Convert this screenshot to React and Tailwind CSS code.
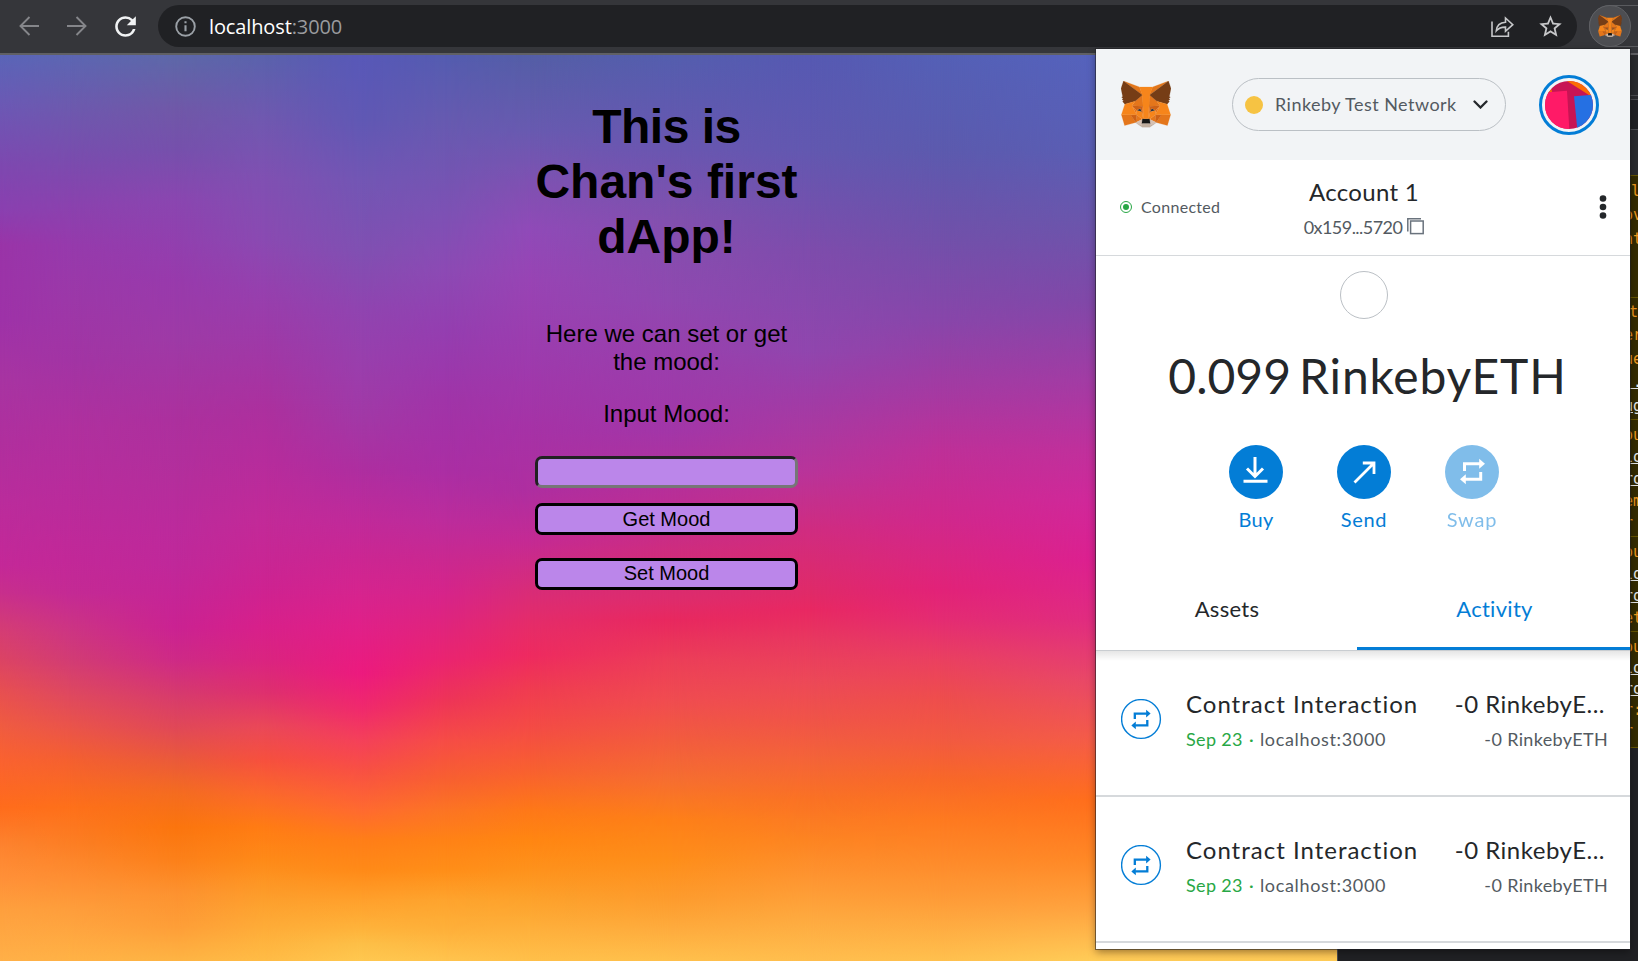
import { MdRefresh, MdStarBorder } from 'react-icons/md';

const MESH = [
  { x: 0, s: [[55, '#5a65b8'], [100, '#6a5ab5'], [165, '#7e48b0'], [210, '#8a40b0'], [245, '#9a34a8'], [320, '#9e32a8'], [380, '#a834a2'], [440, '#b02f9e'], [500, '#ba2c9c'], [565, '#c42898'], [593, '#c82f8c'], [627, '#d43c76'], [660, '#dc4464'], [693, '#e85050'], [727, '#f05c40'], [760, '#fa6230'], [807, '#ff6c1c'], [843, '#fd822e'], [877, '#ff9038'], [910, '#fea03e'], [961, '#ffb048']] },
  { x: 70, s: [[55, '#5c66b2'], [105, '#6c5aae'], [160, '#7a4cae'], [205, '#8a42ae'], [245, '#963aac'], [300, '#9c38a8'], [360, '#a234a4'], [430, '#b0309e'], [490, '#b82c9c'], [560, '#c22898'], [593, '#c42a94'], [627, '#cc3484'], [660, '#d23c74'], [693, '#de4860'], [727, '#ea544a'], [760, '#f46030'], [807, '#fe701a'], [843, '#fc7e24'], [877, '#fe8e32'], [910, '#fe9e3c'], [961, '#ffb246']] },
  { x: 175, s: [[55, '#5d68a8'], [110, '#7058a8'], [150, '#7650ac'], [200, '#8a46b0'], [245, '#923fae'], [280, '#983aac'], [340, '#9e3aa6'], [420, '#ac309e'], [480, '#b42e9c'], [530, '#bc2a9c'], [565, '#c0289a'], [627, '#ca2292'], [660, '#ce2a86'], [693, '#d63a6e'], [727, '#e04858'], [760, '#ea5a3a'], [793, '#f46c20'], [827, '#fb750e'], [860, '#fc801a'], [893, '#fd9230'], [927, '#fe9e38'], [961, '#feb444']] },
  { x: 265, s: [[55, '#5a62ac'], [120, '#7058b0'], [180, '#8050b2'], [240, '#8a4ab2'], [290, '#9640ae'], [350, '#a038a6'], [410, '#ac309e'], [460, '#b62c9c'], [520, '#c22a98'], [560, '#c82694'], [593, '#cf2290'], [627, '#d8208a'], [660, '#da2480'], [693, '#de306e'], [727, '#ea4858'], [760, '#f6503e'], [793, '#fb682c'], [827, '#ff7c14'], [860, '#fe8a18'], [893, '#fd9c2a'], [927, '#feac38'], [961, '#ffbc46']] },
  { x: 362, s: [[55, '#5858b8'], [120, '#6058b4'], [180, '#7256b4'], [250, '#8050b2'], [310, '#9044b0'], [370, '#9a3eac'], [420, '#a238a6'], [470, '#ae2ea0'], [520, '#c02a9a'], [560, '#cc2692'], [593, '#d6248e'], [627, '#e02088'], [673, '#ec1a7e'], [710, '#f02a6c'], [740, '#f4405a'], [770, '#f85044'], [810, '#ff6a30'], [840, '#ff7e18'], [870, '#ff8a18'], [900, '#ffa02c'], [930, '#feb43c'], [945, '#fdc048'], [961, '#ffc850']] },
  { x: 445, s: [[55, '#545cb0'], [120, '#665ab0'], [210, '#7c52b4'], [270, '#8c4ab4'], [330, '#943eb0'], [400, '#a034a8'], [470, '#aa2ea4'], [520, '#bc2c9c'], [560, '#ca2890'], [593, '#d6248a'], [627, '#e0247c'], [660, '#ea2470'], [700, '#ee3458'], [740, '#f64c46'], [780, '#f86030'], [810, '#fc7424'], [840, '#ff8216'], [870, '#ff8e18'], [900, '#fea42e'], [930, '#feb03a'], [961, '#ffc44e']] },
  { x: 530, s: [[55, '#545ea6'], [130, '#685ab0'], [190, '#8250b2'], [230, '#904ab8'], [280, '#9844b4'], [350, '#9c3cae'], [430, '#a632a6'], [490, '#ae2ea0'], [540, '#c42a94'], [590, '#d82c78'], [627, '#e62c68'], [655, '#ee2a60'], [690, '#f03c50'], [730, '#f44c44'], [770, '#f86030'], [810, '#fe7818'], [840, '#ff8612'], [870, '#fe921c'], [900, '#fda22c'], [930, '#feb03c'], [961, '#ffc04a']] },
  { x: 670, s: [[55, '#545eae'], [150, '#6a56b0'], [220, '#8250ae'], [300, '#9048b0'], [360, '#9a3eac'], [430, '#a236a8'], [500, '#ba2e96'], [560, '#d22c7a'], [600, '#de2c6c'], [620, '#e8285f'], [660, '#ec3e58'], [700, '#f04c50'], [740, '#f25c3e'], [780, '#f66e30'], [820, '#fe8018'], [860, '#fe8e1a'], [900, '#fd9c2e'], [930, '#feac3e'], [961, '#ffc04c']] },
  { x: 810, s: [[55, '#5659b2'], [150, '#6258b0'], [250, '#7e4cac'], [350, '#9046ae'], [400, '#a03ca6'], [470, '#b8349a'], [530, '#d02c80'], [593, '#e02a68'], [610, '#e82862'], [640, '#e83860'], [680, '#ec4858'], [720, '#f05448'], [760, '#f46438'], [800, '#fa7224'], [840, '#fd8422'], [880, '#fe9632'], [920, '#feaa40'], [961, '#ffbe4e']] },
  { x: 940, s: [[55, '#5460b6'], [150, '#5c5aae'], [240, '#7250aa'], [320, '#8846aa'], [390, '#a43aa2'], [450, '#be3098'], [520, '#d0288c'], [560, '#da2680'], [590, '#e22278'], [620, '#e42c72'], [660, '#ea4060'], [700, '#ee4e4c'], [740, '#f25a40'], [780, '#f86828'], [820, '#fe7a20'], [860, '#fe8a2a'], [900, '#fe9c38'], [961, '#ffc04e']] },
  { x: 1095, s: [[55, '#5562bc'], [150, '#5a5eb4'], [220, '#6a56ac'], [300, '#8048a8'], [380, '#a23ca4'], [450, '#c0309c'], [500, '#d0289a'], [560, '#dc2090'], [620, '#e02c80'], [680, '#e84868'], [740, '#f45c48'], [800, '#ff6e1c'], [860, '#ff8826'], [910, '#ffa440'], [961, '#ffcc58']] },
];

function Wallpaper() {
  return (
    <svg className="absolute inset-0" width="1337" height="906" viewBox="0 55 1337 906" preserveAspectRatio="none" aria-hidden="true">
      <defs>
        {MESH.map((c, i) => (
          <linearGradient key={i} id={'c' + i} gradientUnits="userSpaceOnUse" x1="0" y1="55" x2="0" y2="961">
            {c.s.map(([y, col]) => <stop key={y} offset={(y - 55) / 906} stopColor={col} />)}
          </linearGradient>
        ))}
        {MESH.slice(1).map((c, i) => (
          <linearGradient key={i} id={'f' + (i + 1)} gradientUnits="userSpaceOnUse" x1={MESH[i].x} y1="0" x2={c.x} y2="0">
            <stop offset="0" stopColor="#fff" stopOpacity="0" />
            <stop offset="1" stopColor="#fff" stopOpacity="1" />
          </linearGradient>
        ))}
        {MESH.slice(1).map((c, i) => (
          <mask key={i} id={'m' + (i + 1)} maskUnits="userSpaceOnUse" x="0" y="55" width="1337" height="906">
            <rect x={MESH[i].x} y="55" width={1337 - MESH[i].x} height="906" fill={`url(#f${i + 1})`} />
          </mask>
        ))}
      </defs>
      {MESH.map((c, i) => (
        <rect key={i} x="0" y="55" width="1337" height="906" fill={`url(#c${i})`} mask={i ? `url(#m${i})` : undefined} />
      ))}
    </svg>
  );
}

const FOX = [
  ['#E2761B', '274.1,35.5 174.6,109.4 193,65.8'],
  ['#E2761B', '44.4,35.5 143.1,110.1 125.6,65.8'],
  ['#E4761B', '238.3,206.8 211.8,247.4 268.5,263 284.8,207.7'],
  ['#E4761B', '33.9,207.7 50.1,263 106.8,247.4 80.3,206.8'],
  ['#E4761B', '103.6,138.2 87.8,162.1 144.1,164.6 142.1,104.1'],
  ['#E4761B', '214.9,138.2 175.9,103.4 174.6,164.6 230.8,162.1'],
  ['#E4761B', '106.8,247.4 140.6,230.9 111.4,208.1'],
  ['#E4761B', '177.9,230.9 211.8,247.4 207.1,208.1'],
  ['#D7C1B3', '211.8,247.4 177.9,230.9 180.6,253 180.3,262.3'],
  ['#D7C1B3', '106.8,247.4 138.3,262.3 138.1,253 140.6,230.9'],
  ['#233447', '138.8,193.5 110.6,185.2 130.5,176.1'],
  ['#233447', '179.7,193.5 188,176.1 208,185.2'],
  ['#CD6116', '106.8,247.4 111.6,206.8 80.3,207.7'],
  ['#CD6116', '207,206.8 211.8,247.4 238.3,207.7'],
  ['#CD6116', '230.8,162.1 174.6,164.6 179.8,193.5 188.1,176.1 208.1,185.2'],
  ['#CD6116', '110.6,185.2 130.6,176.1 138.8,193.5 144.1,164.6 87.8,162.1'],
  ['#E4751F', '87.8,162.1 111.4,208.1 110.6,185.2'],
  ['#E4751F', '208.1,185.2 207.1,208.1 230.8,162.1'],
  ['#E4751F', '144.1,164.6 138.8,193.5 145.4,227.6 146.9,182.7'],
  ['#E4751F', '174.6,164.6 171.9,182.6 173.1,227.6 179.8,193.5'],
  ['#F6851B', '179.8,193.5 173.1,227.6 177.9,230.9 207.1,208.1 208.1,185.2'],
  ['#F6851B', '110.6,185.2 111.4,208.1 140.6,230.9 145.4,227.6 138.8,193.5'],
  ['#C0AD9E', '180.3,262.3 180.6,253 178.1,250.8 140.4,250.8 138.1,253 138.3,262.3 106.8,247.4 117.8,256.4 140.1,271.9 178.4,271.9 200.8,256.4 211.8,247.4'],
  ['#161616', '177.9,230.9 173.1,227.6 145.4,227.6 140.6,230.9 138.1,253 140.4,250.8 178.1,250.8 180.6,253'],
  ['#763D16', '278.3,114.2 286.8,73.4 274.1,35.5 177.9,106.9 214.9,138.2 267.2,153.5 278.8,140 273.8,136.4 281.8,129.1 275.6,124.3 283.6,118.2'],
  ['#763D16', '31.8,73.4 40.3,114.2 34.9,118.2 42.9,124.3 36.8,129.1 44.8,136.4 39.8,140 51.3,153.5 103.6,138.2 140.6,106.9 44.4,35.5'],
  ['#F6851B', '267.2,153.5 214.9,138.2 230.8,162.1 207.1,208.1 238.3,207.7 284.8,207.7'],
  ['#F6851B', '103.6,138.2 51.3,153.5 33.9,207.7 80.3,207.7 111.4,208.1 87.8,162.1'],
  ['#F6851B', '174.6,164.6 177.9,106.9 193.1,65.8 125.6,65.8 140.6,106.9 144.1,164.6 145.3,182.8 145.4,227.6 173.1,227.6 173.3,182.8'],
];

function Fox({ className }) {
  return (
    <svg className={className} viewBox="31.8 35.5 255 236.4" aria-hidden="true">
      {FOX.map(([c, p], i) => <polygon key={i} points={p} fill={c} stroke={c} strokeWidth="1" />)}
    </svg>
  );
}

function SwapArrows() {
  return (
    <g>
      <path d="M19.5 26V18.8H35" fill="none" stroke="currentColor" strokeWidth="3" />
      <path d="M34.2 13.8L40 18.8L34.2 23.8Z" fill="currentColor" />
      <path d="M35.7 27V34.2H20" fill="none" stroke="currentColor" strokeWidth="3" />
      <path d="M20.8 29.2L15 34.2L20.8 39.2Z" fill="currentColor" />
    </g>
  );
}

function Toolbar() {
  return (
    <div className="flex h-[55px] shrink-0 items-center border-b-2 border-[#606064] bg-[#35363a]">
      <div className="flex h-[53px] w-full items-center pb-px">
        <svg className="ml-[19px] size-5 shrink-0 text-[#85868a]" viewBox="0 0 20 20" fill="none" stroke="currentColor" strokeWidth="1.9">
          <path d="M20 10H2M10.5 1L1.5 10l9 9" />
        </svg>
        <svg className="ml-7 size-5 shrink-0 text-[#85868a]" viewBox="0 0 20 20" fill="none" stroke="currentColor" strokeWidth="1.9">
          <path d="M0 10h18M9.5 1l9 9-9 9" />
        </svg>
        <MdRefresh className="ml-[23px] shrink-0 text-[#f1f3f4]" size={31} />
        <div className="ml-[17px] flex h-[42px] w-[1419px] shrink-0 items-center rounded-full bg-[#202124] pl-[17px]">
          <svg className="size-[21px] shrink-0 text-[#9aa0a6]" viewBox="0 0 21 21" fill="none" stroke="currentColor">
            <circle cx="10.5" cy="10.5" r="9.3" strokeWidth="1.9" />
            <path d="M10.5 9.3v6M10.5 5.2v2.1" strokeWidth="2.1" />
          </svg>
          <div className="ml-[13px] pt-px font-['Open_Sans',sans-serif] text-[20px] leading-6 tracking-[-0.12px] text-white">
            localhost<span className="text-[#9a9b9e]">:3000</span>
          </div>
          <svg className="ml-auto size-6 shrink-0 text-[#c7c8ca]" viewBox="0 0 24 24" fill="none" stroke="currentColor" strokeWidth="1.6">
            <path d="M2 7.500v14.700h16.400v-4.500" />
            <path d="M6.300 16.800c.4-5.400 3.600-8.300 9.200-8.600V4l7.300 6.700-7.300 6.600v-4.200c-4-.1-6.800.9-9.200 3.700z" strokeLinejoin="miter" />
          </svg>
          <MdStarBorder className="ml-[23px] mr-[13px] shrink-0 text-[#c7c8ca]" size={27} />
        </div>
        <div className="ml-3 flex h-[42px] flex-1 items-center rounded-l-full border-y border-l border-[#5a5b5f]">
          <div className="-ml-px flex size-[42px] shrink-0 items-center justify-center rounded-full border border-[#606165] bg-[#4d4e52]">
            <Fox className="w-6" />
          </div>
        </div>
      </div>
    </div>
  );
}

function Dapp() {
  return (
    <div className="relative w-[1337px] shrink-0 overflow-hidden">
      <Wallpaper />
      <div className="relative ml-[535px] flex w-[263px] flex-col pt-[44px] text-center font-['Liberation_Sans',Arial,sans-serif] text-black">
        <h1 className="whitespace-nowrap text-[48px] font-bold leading-[55px]">
          <span className="tracking-[-0.5px]">This is</span><br />Chan's first<br />dApp!
        </h1>
        <p className="mt-[56px] text-[24px] leading-[28px]">Here we can set or get<br />the mood:</p>
        <p className="mt-6 text-[24px] leading-[28px]">Input Mood:</p>
        <input className="mt-7 h-8 w-full rounded-[7px] border-[3px] border-b-[#767676] border-l-[#212121] border-r-[#767676] border-t-[#212121] bg-[#bb86ea] px-2" />
        <button className="mt-[15px] h-8 rounded-[7px] border-[3px] border-black bg-[#bb86ea] text-[20px] leading-[26px]">Get Mood</button>
        <button className="mt-[23px] flex h-8 justify-center rounded-[7px] border-[3px] border-black bg-[#bb86ea] text-[20px] leading-[24px]">Set Mood</button>
      </div>
    </div>
  );
}

const U = 'w-4 text-[#e8eaed] underline';
function Devtools() {
  return (
    <div className="flex flex-1 justify-end overflow-hidden border-l border-[#4a4b4f] bg-[#202124]">
      <div className="w-2 overflow-hidden font-['DejaVu_Sans_Mono',monospace] text-[15px] text-[#ee9a20]">
        <div className="h-[41px] border-b border-[#4b4c50] bg-[#292a2d]" />
        <div className="h-[4px] border-b border-[#4b4c50] bg-[#292a2d]" />
        <div className="h-[30px] border-b border-[#4b4c50] bg-[#202124]" />
        <div className="h-[45px] bg-[#292a2d]" />
        <div className="h-[122px] border-t border-[#665500] bg-[#332b00] pt-[3px] leading-[24px]">
          <div className="-ml-2 w-5">&nbsp;l</div><div className="-ml-1.5 w-5">ov</div><div className="-ml-1.5 w-5">nt</div>
        </div>
        <div className="h-[122px] border-t border-[#665500] bg-[#332b00] pt-[3px] leading-[23.4px]">
          <div className="-ml-2.5 w-5">&nbsp;t</div><div className="-ml-1.5 w-5">er</div><div className="-ml-1.5 w-5">ue</div>
          <div className="-ml-1.5"><div className={U}>:.</div></div><div className="-ml-1.5"><div className={U}>ug</div></div>
        </div>
        <div className="h-[117px] border-t border-[#665500] bg-[#332b00] pt-1 leading-[22px]">
          <div className="-ml-1.5 w-5">ou</div>
          <div className="-ml-1.5"><div className={U}>lo</div></div><div className="-ml-1.5"><div className={U}>ro</div></div>
          <div className="-ml-1.5 w-5">em</div><div className="-ml-1.5 w-5">r</div>
        </div>
        <div className="h-[95px] border-t border-[#665500] bg-[#332b00] pt-1 leading-[22px]">
          <div className="-ml-1.5 w-5">ou</div>
          <div className="-ml-1.5"><div className={U}>lo</div></div><div className="-ml-1.5"><div className={U}>ro</div></div>
          <div className="-ml-1.5 w-5">et</div>
        </div>
        <div className="h-[117px] border-y border-[#665500] bg-[#332b00] pt-[5px] leading-[21px]">
          <div className="-ml-1.5 w-5">ou</div>
          <div className="-ml-1.5"><div className={U}>lo</div></div><div className="-ml-1.5"><div className={U}>ro</div></div>
          <div className="-ml-1.5 w-5">r:</div><div className="-ml-1.5 w-5">r</div>
        </div>
      </div>
    </div>
  );
}

function Avatar() {
  return (
    <div className="ml-[33px] flex size-[60px] shrink-0 items-center justify-center rounded-full border-[3px] border-[#037dd6]">
      <svg className="size-12 shrink-0 rounded-full" viewBox="0 0 48 48">
        <rect width="48" height="48" fill="#c81454" />
        <path d="M22 0L45.500 15L48 14V0Z" fill="#fc6c04" />
        <path d="M3 12L6.500 8L7 11Z" fill="#fc6c04" />
        <path d="M0 11.500L22 9.700L24.300 48H0Z" fill="#ff1a67" />
        <path d="M29 15.300L48 13.700V48H32.300Z" fill="#2570e3" />
      </svg>
    </div>
  );
}

function Action({ label, track, faded, children }) {
  return (
    <div className={'flex w-[54px] flex-col items-center text-[#037dd6]' + (faded ? ' opacity-50' : '')}>
      <svg className="size-[54px] text-white" viewBox="0 0 54 54">
        <circle cx="27" cy="27" r="27" fill="#037dd6" />
        {children}
      </svg>
      <div className={'mt-2 text-[20px] leading-6 ' + track}>{label}</div>
    </div>
  );
}

function ActivityRow() {
  return (
    <div className="flex h-[146px] border-b-2 border-[#d6d9dc] pl-[25px]">
      <svg className="mt-[48px] size-[41px] shrink-0 text-[#037dd6]" viewBox="0 0 41 41">
        <circle cx="20" cy="20" r="19.400" fill="none" stroke="currentColor" strokeWidth="1.4" />
        <g transform="translate(-1.200 0.100) scale(0.770)"><SwapArrows /></g>
      </svg>
      <div className="ml-6 flex-1 whitespace-nowrap pt-[38px]">
        <div className="text-[24px] leading-[29px] tracking-[1px] text-[#24272a]">Contract Interaction</div>
        <div className="mt-[10px] flex text-[18px] leading-[22px] text-[#535a61]">
          <span className="tracking-[0.35px] text-[#28a745]">Sep 23</span>
          <span className="w-[17px] text-center text-[#28a745]">·</span>
          <span className="tracking-[0.66px]">localhost:3000</span>
        </div>
      </div>
      <div className="flex flex-col items-end whitespace-nowrap pr-[22px] pt-[38px]">
        <div className="pr-[3px] text-[24px] leading-[29px] tracking-[0.5px] text-[#24272a]">-0 RinkebyE...</div>
        <div className="mt-[10px] text-[18px] leading-[22px] tracking-[0.35px] text-[#535a61]">-0 RinkebyETH</div>
      </div>
    </div>
  );
}

function Popup() {
  return (
    <div className="absolute left-[1096px] top-[49px] flex h-[900px] w-[534px] flex-col bg-white font-[Lato,sans-serif] text-[#24272a] shadow-[0_0_0_1px_rgba(32,33,36,0.55),0_3px_8px_rgba(0,0,0,0.4)]">
      <div className="flex h-[111px] shrink-0 items-center bg-[#f2f4f6] pl-[25px]">
        <Fox className="w-[50px]" />
        <div className="ml-[61px] flex h-[53px] w-[274px] items-center rounded-full border border-[#bbc0c5] pl-[12px]">
          <div className="size-[18px] rounded-full bg-[#f6c343]" />
          <div className="ml-[12px] pb-0.5 text-[18px] leading-[22px] tracking-[0.46px] text-[#535a61]">Rinkeby Test Network</div>
          <svg className="ml-[16px] h-[9px] w-[15px]" viewBox="0 0 15 9" fill="none" stroke="#24272a" strokeWidth="2.3" strokeLinecap="round">
            <path d="M1.500 1.500l6 6 6-6" />
          </svg>
        </div>
        <Avatar />
      </div>
      <div className="grid h-[96px] shrink-0 grid-cols-[1fr_auto_1fr] items-center border-b border-[#d6d9dc] pl-6 pr-[23px]">
        <div className="flex items-center pb-0.5">
          <div className="flex size-3 items-center justify-center rounded-full border border-[#28a745]">
            <div className="size-[6px] rounded-full bg-[#28a745]" />
          </div>
          <div className="ml-[9px] text-[16px] leading-5 tracking-[0.3px] text-[#535a61]">Connected</div>
        </div>
        <div className="flex flex-col items-center pt-px">
          <div className="-mt-0.5 pl-px text-[24px] leading-[29px] tracking-[0.3px]">Account 1</div>
          <div className="mt-[10px] flex items-center pl-px text-[18px] leading-[22px] text-[#535a61]">
            <span className="tracking-[-0.55px]">0x159...5720</span>
            <svg className="ml-[5px] size-[17px]" viewBox="0 0 17 17" fill="none" stroke="#6a737d" strokeWidth="1.5">
              <path d="M.8 13.500V.8H14" />
              <rect x="3.600" y="3" width="12.600" height="12.600" />
            </svg>
          </div>
        </div>
        <svg className="mb-0.5 h-6 w-2 justify-self-end" viewBox="0 0 8 24" fill="#24272a">
          <circle cx="4" cy="3.500" r="3.300" /><circle cx="4" cy="12" r="3.300" /><circle cx="4" cy="20.500" r="3.300" />
        </svg>
      </div>
      <div className="flex shrink-0 flex-col items-center pl-0.5 pt-[15px]">
        <div className="size-12 rounded-full border border-[#bbc0c5]" />
        <div className="mt-[28px] flex gap-[8px] pl-[7px] text-[48px] leading-[58px]">
          <span>0.099</span>
          <span className="tracking-[0.8px]">RinkebyETH</span>
        </div>
        <div className="mt-[40px] flex gap-[54px]">
          <Action label="Buy" track="tracking-[0.2px]">
            <path d="M26 12V31M18 23.500L26 31.500L34 23.500M14.500 36.200H38.500" fill="none" stroke="currentColor" strokeWidth="3" />
          </Action>
          <Action label="Send" track="tracking-[0.7px]">
            <path d="M17.500 37.500L36.500 18.500M25.800 18H37V29" fill="none" stroke="currentColor" strokeWidth="2.8" />
          </Action>
          <Action label="Swap" track="tracking-[0.8px]" faded><SwapArrows /></Action>
        </div>
      </div>
      <div className="relative mt-[29px] flex h-[91px] shrink-0 border-b border-[#c9cdd1] text-[22px] leading-[26px]">
        <div className="w-[261px] pl-px pt-[36px] text-center tracking-[0.3px]">Assets</div>
        <div className="flex-1 border-b-[3px] border-[#037dd6] pl-0.5 pt-[36px] text-center tracking-[0.3px] text-[#037dd6]">Activity</div>
        <div className="absolute inset-x-0 top-[91px] h-2.5 bg-gradient-to-b from-black/10 to-transparent" />
      </div>
      <ActivityRow />
      <ActivityRow />
    </div>
  );
}

export default function App() {
  return (
    <div className="relative flex h-[961px] w-[1638px] flex-col overflow-hidden bg-[#202124]">
      <Toolbar />
      <div className="flex min-h-0 flex-1">
        <Dapp />
        <Devtools />
      </div>
      <Popup />
    </div>
  );
}
